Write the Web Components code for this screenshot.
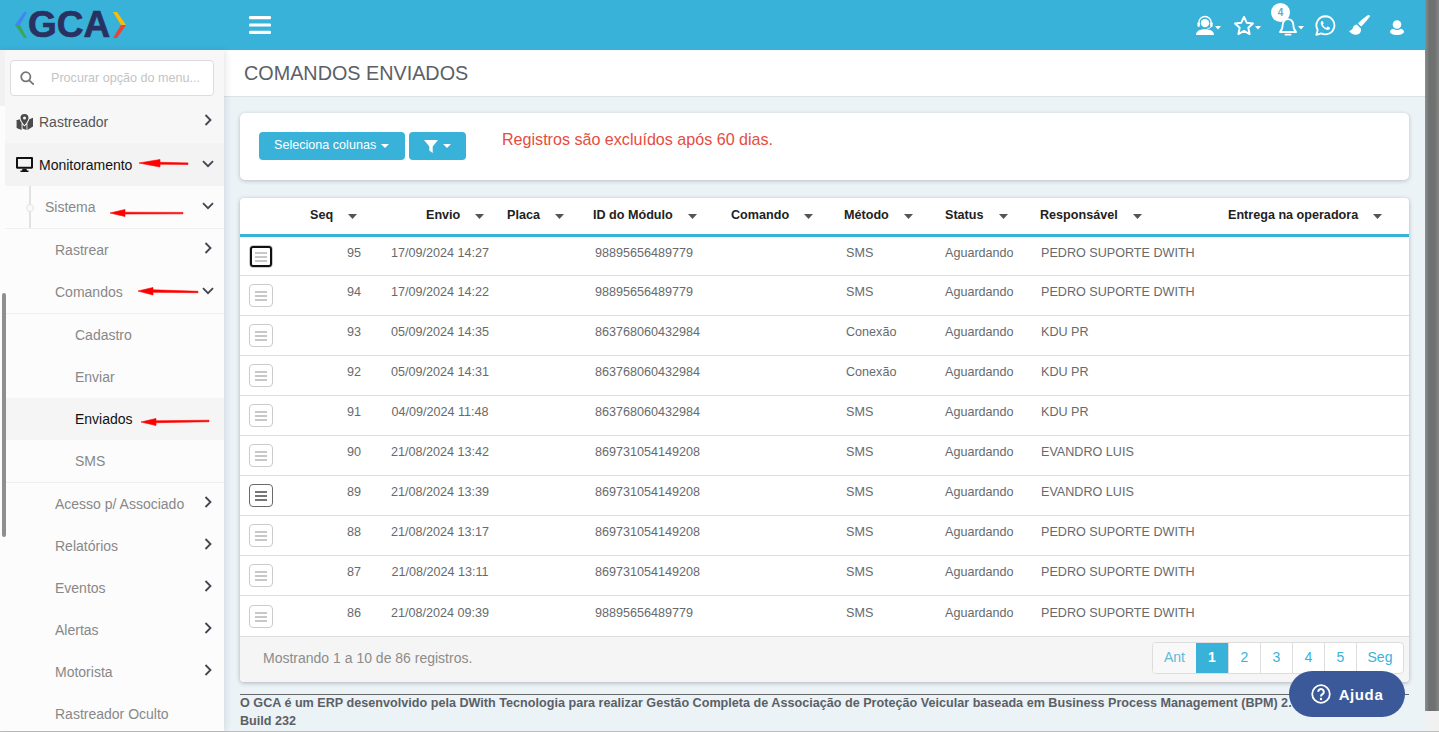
<!DOCTYPE html>
<html lang="pt-BR">
<head>
<meta charset="utf-8">
<title>Comandos enviados</title>
<style>
html, body { margin: 0; height: 732px; overflow: hidden; }
body { font-family: "Liberation Sans", Arial, sans-serif; font-size: 14px; color: #676a6c; background: #ecf3f7; }
</style>
</head>
<body>
<gca-app>
    <gca-header slot="header"></gca-header>
    <gca-sidebar slot="sidebar">
        <gca-nav-item label="Rastreador" level="0" icon="map" arrow="right" tone="top"></gca-nav-item>
        <gca-nav-item label="Monitoramento" level="0" icon="desktop" arrow="down" tone="open"></gca-nav-item>
        <gca-nav-item label="Sistema" level="1" arrow="down" tree divider></gca-nav-item>
        <gca-nav-item label="Rastrear" level="2" arrow="right"></gca-nav-item>
        <gca-nav-item label="Comandos" level="2" arrow="down" divider></gca-nav-item>
        <gca-nav-item label="Cadastro" level="3"></gca-nav-item>
        <gca-nav-item label="Enviar" level="3"></gca-nav-item>
        <gca-nav-item label="Enviados" level="3" tone="active"></gca-nav-item>
        <gca-nav-item label="SMS" level="3" divider></gca-nav-item>
        <gca-nav-item label="Acesso p/ Associado" level="2" arrow="right"></gca-nav-item>
        <gca-nav-item label="Relatórios" level="2" arrow="right"></gca-nav-item>
        <gca-nav-item label="Eventos" level="2" arrow="right"></gca-nav-item>
        <gca-nav-item label="Alertas" level="2" arrow="right"></gca-nav-item>
        <gca-nav-item label="Motorista" level="2" arrow="right"></gca-nav-item>
        <gca-nav-item label="Rastreador Oculto" level="2"></gca-nav-item>
    </gca-sidebar>
    <gca-page-title slot="main">COMANDOS ENVIADOS</gca-page-title>
    <gca-toolbar slot="main">Registros são excluídos após 60 dias.</gca-toolbar>
    <gca-table slot="main">
        <gca-row first focus seq="95" date="17/09/2024 14:27" module="98895656489779" method="SMS" status="Aguardando" user="PEDRO SUPORTE DWITH"></gca-row>
        <gca-row seq="94" date="17/09/2024 14:22" module="98895656489779" method="SMS" status="Aguardando" user="PEDRO SUPORTE DWITH"></gca-row>
        <gca-row seq="93" date="05/09/2024 14:35" module="863768060432984" method="Conexão" status="Aguardando" user="KDU PR"></gca-row>
        <gca-row seq="92" date="05/09/2024 14:31" module="863768060432984" method="Conexão" status="Aguardando" user="KDU PR"></gca-row>
        <gca-row seq="91" date="04/09/2024 11:48" module="863768060432984" method="SMS" status="Aguardando" user="KDU PR"></gca-row>
        <gca-row seq="90" date="21/08/2024 13:42" module="869731054149208" method="SMS" status="Aguardando" user="EVANDRO LUIS"></gca-row>
        <gca-row hover seq="89" date="21/08/2024 13:39" module="869731054149208" method="SMS" status="Aguardando" user="EVANDRO LUIS"></gca-row>
        <gca-row seq="88" date="21/08/2024 13:17" module="869731054149208" method="SMS" status="Aguardando" user="PEDRO SUPORTE DWITH"></gca-row>
        <gca-row seq="87" date="21/08/2024 13:11" module="869731054149208" method="SMS" status="Aguardando" user="PEDRO SUPORTE DWITH"></gca-row>
        <gca-row last seq="86" date="21/08/2024 09:39" module="98895656489779" method="SMS" status="Aguardando" user="PEDRO SUPORTE DWITH"></gca-row>
    </gca-table>
    <gca-footer slot="main"></gca-footer>
    <gca-help slot="help"></gca-help>
</gca-app>

<script>
const appTemplate = document.createElement('template');
appTemplate.innerHTML = `
<style>
:host {
    display: grid;
    grid-template-columns: 1fr 14px;
    height: 732px;
    position: relative;
    overflow: hidden;
}
.page {
    display: flex;
    flex-direction: column;
    min-width: 0;
    height: 731px;
}
.body {
    display: flex;
    flex: 1;
    min-height: 0;
}
.main {
    flex: 1;
    min-width: 0;
    display: flex;
    flex-direction: column;
}
.scrollbar {
    display: flex;
    flex-direction: column;
    background: #f1f1f1;
}
.thumb {
    height: 711px;
    background: linear-gradient(90deg, #8d8f8f, #6f7171 30%, #6f7171 70%, #858787);
    filter: blur(0.6px);
}
.baseline {
    position: absolute;
    left: 0;
    right: 0;
    bottom: 0;
    height: 1px;
    background: #bdbdbd;
}
</style>
<div class="page">
    <slot name="header"></slot>
    <div class="body">
        <slot name="sidebar"></slot>
        <div class="main"><slot name="main"></slot></div>
    </div>
</div>
<div class="scrollbar"><div class="thumb"></div></div>
<div class="baseline"></div>
<slot name="help"></slot>
`;

class GcaApp extends HTMLElement {
    constructor() {
        super();
        this.attachShadow({ mode: 'open' });
        this.shadowRoot.appendChild(appTemplate.content.cloneNode(true));
    }
}

const caretSvg = '<svg class="caret" width="6" height="4" viewBox="0 0 6 4"><path d="M0 0h6L3 3.500z" fill="#fff"/></svg>';

const headerTemplate = document.createElement('template');
headerTemplate.innerHTML = `
<style>
:host {
    display: flex;
    align-items: center;
    height: 50px;
    background: #39b2d9;
    flex: none;
}
.logo {
    width: 225px;
    flex: none;
    display: flex;
    align-items: center;
    padding-left: 15px;
    box-sizing: border-box;
}
.logo span {
    font-size: 37px;
    line-height: 50px;
    font-weight: bold;
    color: #28315f;
    -webkit-text-stroke: 0.7px #28315f;
    margin: 0 3px 0 1px;
}
.menu {
    margin-left: 24px;
    display: block;
}
.icons {
    margin-left: auto;
    padding-right: 21px;
    display: flex;
    align-items: center;
    height: 50px;
}
.icons svg { display: block; flex: none; }
.caret { margin: 5px 0 0 1px; }
.bell { position: relative; margin-left: 18px; }
.badge {
    position: absolute;
    left: -8px;
    top: -11px;
    width: 19px;
    height: 19px;
    border-radius: 50%;
    background: #fff;
    color: #6fa8c9;
    font-size: 10px;
    font-weight: bold;
    line-height: 19px;
    text-align: center;
}
</style>
<div class="logo">
    <svg width="12" height="26" viewBox="0 0 12 26">
        <path d="M9 0h3L5 13H0z" fill="#4285f4"/>
        <path d="M0 13h5l7 13H9z" fill="#3aa757"/>
    </svg>
    <span>GCA</span>
    <svg width="13" height="26" viewBox="0 0 13 26">
        <path d="M0 0h4l9 13H8z" fill="#fbbc05"/>
        <path d="M8 13h5L4 26H0z" fill="#ea4335"/>
    </svg>
</div>
<svg class="menu" width="22" height="18" viewBox="0 0 22 18" fill="#fff">
    <rect y="0" width="22" height="3.2" rx="1.2"/>
    <rect y="7.4" width="22" height="3.2" rx="1.2"/>
    <rect y="14.8" width="22" height="3.2" rx="1.2"/>
</svg>
<div class="icons">
    <svg width="18" height="21" viewBox="0 0 19 21" style="margin-top:1px">
        <path d="M3 10V7.500a6.500 6.500 0 0 1 13 0V10" fill="none" stroke="#fff" stroke-width="1.400"/>
        <circle cx="9.500" cy="8" r="4.400" fill="#fff"/>
        <rect x="1.500" y="7" width="2.600" height="5" rx="1.200" fill="#fff"/>
        <rect x="15" y="7" width="2.600" height="5" rx="1.200" fill="#fff"/>
        <path d="M16 11c0 2-2 2.600-4 2.600" fill="none" stroke="#fff" stroke-width="1"/>
        <path d="M0 20.500c0-3.800 3.600-6 9.500-6s9.500 2.200 9.500 6z" fill="#fff"/>
    </svg>
    ${caretSvg}
    <svg width="20" height="19" viewBox="0.800 0.800 18.400 17.600" style="margin-left:13px">
        <path d="M10 1.600l2.500 5.400 5.800.7-4.300 4 1.200 5.800L10 14.600l-5.200 2.900L6 11.700l-4.300-4 5.800-.7z" fill="none" stroke="#fff" stroke-width="1.800" stroke-linejoin="round"/>
    </svg>
    ${caretSvg}
    <div class="bell">
        <svg width="18" height="19" viewBox="0 0 18 19" style="margin-top:3px">
            <path d="M1 15c2-2 2.700-4 2.700-7.500a5.300 5.300 0 0 1 10.600 0C14.300 11 15 13 17 15z" fill="none" stroke="#fff" stroke-width="1.800" stroke-linejoin="round"/>
            <rect x="5.500" y="16.800" width="7" height="1.800" rx=".8" fill="#fff"/>
        </svg>
        <div class="badge">4</div>
    </div>
    ${caretSvg}
    <svg width="21" height="21" viewBox="0 0 22 22" style="margin-left:11px">
        <path d="M11 1.300a9.500 9.500 0 0 0-8.200 14.300L1.400 20.700l5.200-1.400A9.500 9.500 0 1 0 11 1.300z" fill="none" stroke="#fff" stroke-width="1.900" stroke-linejoin="round"/>
        <path d="M7.800 6.200c-.4 0-.9.200-1.200.700-.5.700-.8 1.600-.4 2.800.7 2.200 3.400 5 6 5.800 1.300.4 2.400 0 3-.7.500-.5.600-1.200.5-1.500-.1-.2-2.200-1.200-2.500-1.200-.3 0-.9 1.100-1.300 1.200-.9.200-3.300-1.900-3.700-3.100-.1-.3.900-1 .9-1.400 0-.3-.8-2.500-1.300-2.600z" fill="#fff"/>
    </svg>
    <svg width="21" height="20" viewBox="0 0 21 20" style="margin-left:13px">
        <path d="M19.300 0c-.9 0-8 5.600-10.300 8.600l3 2.900C15 9 21 1.800 21 1.200 21 .5 20 0 19.300 0z" fill="#fff"/>
        <path d="M7.800 9.400c-2.500.2-3.600 1.800-4 3.700-.3 1.300-1.600 2.500-3.800 2.900 1.700 2.700 4.800 4 7.300 3.700 3-.3 5-2.300 4.700-6z" fill="#fff"/>
    </svg>
    <svg width="14" height="15" viewBox="0 0 14 15" style="margin:5px 0 0 20px">
        <circle cx="7" cy="4.500" r="4.300" fill="#fff"/>
        <path d="M0 11.800c0-1.800 2.500-3 3.500-3 1 .8 2.200 1.200 3.500 1.200s2.500-.4 3.500-1.200c1 0 3.500 1.200 3.500 3s-3 3.200-7 3.200-7-1.400-7-3.200z" fill="#fff"/>
    </svg>
</div>
`;

class GcaHeader extends HTMLElement {
    constructor() {
        super();
        this.attachShadow({ mode: 'open' });
        this.shadowRoot.appendChild(headerTemplate.content.cloneNode(true));
    }
}

const sidebarTemplate = document.createElement('template');
sidebarTemplate.innerHTML = `
<style>
:host {
    display: block;
    position: relative;
    width: 224px;
    flex: none;
    background: #fcfcfc;
    box-shadow: 2px 0 6px rgba(40, 60, 80, 0.12);
    overflow: hidden;
    z-index: 1;
}
.search-block {
    height: 56px;
    margin-bottom: -5px;
    background: #f7f7f7;
    padding: 10px 10px 0;
    box-sizing: border-box;
}
.search {
    display: flex;
    align-items: center;
    height: 36px;
    box-sizing: border-box;
    background: #fff;
    border: 1px solid #ddd;
    border-radius: 4px;
    padding-left: 9px;
    font-size: 12.6px;
    color: #c4c4c4;
}
.search svg { margin-right: 17px; }
.gutter {
    position: absolute;
    left: 0;
    top: 0;
    width: 5px;
    height: 56px;
    background: #f1f1f1;
}
.scroll-thumb {
    position: absolute;
    left: 2px;
    top: 243px;
    width: 4px;
    height: 244px;
    border-radius: 2px;
    background: #8f8f8f;
}
.arrows {
    position: absolute;
    left: 0;
    top: 0;
    pointer-events: none;
}
</style>
<div class="search-block">
    <div class="search">
        <svg width="14" height="14" viewBox="0 0 14 14" fill="none" stroke="#777" stroke-width="1.800">
            <circle cx="5.800" cy="5.800" r="4.600"/><path d="M9.300 9.300l3.900 3.900" stroke-linecap="round"/>
        </svg>
        <span>Procurar opção do menu...</span>
    </div>
</div>
<slot></slot>
<div class="gutter"></div>
<div class="scroll-thumb"></div>
<svg class="arrows" width="224" height="682" viewBox="0 50 224 682" fill="#f00" stroke="#f00">
    <path d="M139 163l21-3.500v2.800l28 .6v1.600l-28-.3v2.800z" stroke-width=".6"/>
    <path d="M110 213l15-3.500v2.700l58 .2v1.400l-58 .2v2.500z" stroke-width=".6"/>
    <path d="M138 291l15-3.500v2.300l45 1.500v1.400l-45-.4v2.700z" stroke-width=".6"/>
    <path d="M141 422l15-3.500v2.300l53-.6v1.500l-53 1v2.800z" stroke-width=".6"/>
</svg>
`;

class GcaSidebar extends HTMLElement {
    constructor() {
        super();
        this.attachShadow({ mode: 'open' });
        this.shadowRoot.appendChild(sidebarTemplate.content.cloneNode(true));
    }
}

const navIcons = {
    map: `<svg width="17" height="16" viewBox="0 0 17 16" fill="#4a4a4a">
        <path d="M0 6.500l3.600-1.300c.5 1.500 1.200 2.800 2 3.900V16L.6 14V7z"/>
        <path d="M6.500 10.500c.7.800 1.300 1.400 2 2 .7-.6 1.300-1.200 2-2V16l-4-1.500z"/>
        <path d="M11.400 9.100c.8-1.100 1.500-2.400 2-3.900l3.600-1.400v8.800l-5.600 3.400z"/>
        <path fill-rule="evenodd" d="M8.500 0a4 4 0 0 1 4 4c0 2-2.500 5.500-4 7.300C7 9.500 4.500 6 4.500 4a4 4 0 0 1 4-4zm0 2.500a1.500 1.500 0 1 0 0 3 1.500 1.500 0 0 0 0-3z"/>
    </svg>`,
    desktop: `<svg width="17" height="15" viewBox="0 0 17 15" fill="#111">
        <path fill-rule="evenodd" d="M1.200 0h14.600c.7 0 1.200.5 1.200 1.200v9.300c0 .7-.5 1.200-1.200 1.200H1.200C.5 11.700 0 11.200 0 10.500V1.200C0 .5.500 0 1.200 0zm.8 2v7.700h13V2z"/>
        <path d="M6.500 11.700h4l.4 1.700h1.600V15h-8v-1.600h1.600z"/>
    </svg>`
};

const navArrows = {
    right: '<svg width="8" height="12" viewBox="0 0 8 12"><path d="M1.500 1l5 5-5 5" fill="none" stroke="#3f4650" stroke-width="1.800"/></svg>',
    down: '<svg width="12" height="8" viewBox="0 0 12 8"><path d="M1 1.200l5 5 5-5" fill="none" stroke="#3f4650" stroke-width="1.800"/></svg>'
};

const navItemTemplate = document.createElement('template');
navItemTemplate.innerHTML = `
<style>
:host {
    display: flex;
    align-items: center;
    position: relative;
    height: 42px;
    box-sizing: border-box;
    font-size: 14px;
    color: #888;
    margin-left: 5px;
}
:host([level="0"]) { padding-left: 11px; }
:host([level="1"]) { padding-left: 40px; }
:host([level="2"]) { padding-left: 50px; }
:host([level="3"]) { padding-left: 70px; }
:host([divider]), :host([tone="open"]) { height: 43px; }
:host([divider]) { border-bottom: 1px solid #efefef; }
:host([tone="top"]) { background: #f7f7f7; color: #555; }
:host([tone="open"]) { background: #f3f3f3; color: #111; }
:host([tone="active"]) { background: #f5f5f5; color: #111; }
.icon { display: flex; width: 23px; flex: none; }
.arrow {
    position: absolute;
    left: 197px;
    top: 0;
    bottom: 0;
    width: 12px;
    display: flex;
    align-items: center;
    justify-content: center;
}
.arrow.right { padding-bottom: 4px; box-sizing: border-box; }
.arrow.down { padding-bottom: 2px; box-sizing: border-box; }
.line {
    position: absolute;
    left: 24px;
    top: 0;
    bottom: 0;
    width: 2px;
    background: #e2e2e2;
}
.dot {
    position: absolute;
    left: 21px;
    top: 18px;
    width: 6px;
    height: 6px;
    border: 1px solid #e2e2e2;
    border-radius: 50%;
    background: #fafafa;
}
</style>
`;

class GcaNavItem extends HTMLElement {
    constructor() {
        super();
        this.attachShadow({ mode: 'open' });
        this.shadowRoot.appendChild(navItemTemplate.content.cloneNode(true));
    }

    connectedCallback() {
        const icon = this.getAttribute('icon');
        const arrow = this.getAttribute('arrow');
        const holder = document.createElement('template');
        holder.innerHTML = `
            ${this.hasAttribute('tree') ? '<div class="line"></div><div class="dot"></div>' : ''}
            ${icon ? `<span class="icon">${navIcons[icon]}</span>` : ''}
            <span>${this.getAttribute('label')}</span>
            ${arrow ? `<span class="arrow ${arrow}">${navArrows[arrow]}</span>` : ''}
        `;
        this.shadowRoot.appendChild(holder.content);
    }
}

const pageTitleTemplate = document.createElement('template');
pageTitleTemplate.innerHTML = `
<style>
:host {
    display: flex;
    align-items: center;
    height: 47px;
    box-sizing: border-box;
    padding-left: 20px;
    background: #fff;
    border-bottom: 1px solid #dde2e5;
    font-size: 19.8px;
    color: #5b6066;
}
</style>
<slot></slot>
`;

class GcaPageTitle extends HTMLElement {
    constructor() {
        super();
        this.attachShadow({ mode: 'open' });
        this.shadowRoot.appendChild(pageTitleTemplate.content.cloneNode(true));
    }
}

const toolbarTemplate = document.createElement('template');
toolbarTemplate.innerHTML = `
<style>
:host {
    display: flex;
    align-items: flex-start;
    height: 67px;
    box-sizing: border-box;
    margin: 16px 16px 0 16px;
    padding: 19px 0 0 19px;
    background: #fff;
    border-radius: 5px;
    box-shadow: 0 1px 4px rgba(0, 0, 0, 0.22);
}
button {
    display: flex;
    align-items: center;
    height: 28px;
    border: 0;
    border-radius: 4px;
    background: #39b2d9;
    color: #fff;
    font: 12.6px "Liberation Sans", Arial, sans-serif;
    padding: 0 0 2px;
}
.columns { width: 146px; padding-left: 15px; }
.filter { width: 57px; padding: 0 0 0 15px; margin-left: 4px; }
.sort { margin-left: 5px; }
.columns .sort { margin-top: 2px; }
.note {
    margin: -1px 0 0 36px;
    font-size: 16.1px;
    line-height: 16px;
    color: #e74c3c;
}
</style>
<button class="columns">Seleciona colunas<svg class="sort" width="8" height="4" viewBox="0 0 8 4"><path d="M0 0h8L4 4z" fill="#fff"/></svg></button>
<button class="filter">
    <svg width="14" height="13" viewBox="0 0 14 13"><path d="M0 0h14L8.700 6.500V13L5.300 10.500v-4z" fill="#fff"/></svg>
    <svg class="sort" width="8" height="4" viewBox="0 0 8 4"><path d="M0 0h8L4 4z" fill="#fff"/></svg>
</button>
<div class="note"><slot></slot></div>
`;

class GcaToolbar extends HTMLElement {
    constructor() {
        super();
        this.attachShadow({ mode: 'open' });
        this.shadowRoot.appendChild(toolbarTemplate.content.cloneNode(true));
    }
}

const COLUMNS = '56px 75px 126px 86px 138px 113px 101px 95px 188px 191px';

const tableTemplate = document.createElement('template');
tableTemplate.innerHTML = `
<style>
:host {
    display: block;
    margin: 18px 16px 0 16px;
    background: #fff;
    border-radius: 4px;
    box-shadow: 0 1px 4px rgba(0, 0, 0, 0.28);
    font-size: 12.6px;
}
.head {
    display: grid;
    grid-template-columns: ${COLUMNS};
    height: 39px;
    box-sizing: border-box;
    border-bottom: 3px solid #39b2d9;
    padding-bottom: 3px;
    align-items: center;
    font-weight: bold;
    color: #222;
}
.head div {
    display: flex;
    align-items: center;
    padding-left: 10px;
    white-space: nowrap;
}
.head div.seq { padding-left: 14px; }
.head div.envio { padding-left: 55px; }
.head svg { margin: 3px 0 0 15px; flex: none; }
.foot {
    display: flex;
    justify-content: space-between;
    height: 45px;
    box-sizing: border-box;
    padding: 5px 5px 0 23px;
    background: #f5f5f5;
    border-radius: 0 0 4px 4px;
    font-size: 14px;
    color: #8c8c8c;
}
.count { line-height: 32px; }
.pages {
    display: flex;
    height: 32px;
    box-sizing: border-box;
    border: 1px solid #ddd;
    border-radius: 4px;
    background: #fff;
    color: #39b2d9;
    overflow: hidden;
}
.pages span {
    display: flex;
    align-items: center;
    justify-content: center;
    width: 32px;
    box-sizing: border-box;
    border-left: 1px solid #ddd;
    padding-bottom: 3px;
}
.pages span:first-child { width: 43px; border-left: 0; background: #f8f8f8; color: #5fb9d8; }
.pages span:last-child { width: 47px; }
.pages span.on { background: #39b2d9; color: #fff; border-left: 0; font-weight: bold; }
</style>
<div class="head">
    <div></div>
    <div class="seq">Seq<svg width="9" height="5" viewBox="0 0 9 5"><path d="M0 0h9L4.500 5z" fill="#555"/></svg></div>
    <div class="envio">Envio<svg width="9" height="5" viewBox="0 0 9 5"><path d="M0 0h9L4.500 5z" fill="#555"/></svg></div>
    <div>Placa<svg width="9" height="5" viewBox="0 0 9 5"><path d="M0 0h9L4.500 5z" fill="#555"/></svg></div>
    <div>ID do Módulo<svg width="9" height="5" viewBox="0 0 9 5"><path d="M0 0h9L4.500 5z" fill="#555"/></svg></div>
    <div>Comando<svg width="9" height="5" viewBox="0 0 9 5"><path d="M0 0h9L4.500 5z" fill="#555"/></svg></div>
    <div>Método<svg width="9" height="5" viewBox="0 0 9 5"><path d="M0 0h9L4.500 5z" fill="#555"/></svg></div>
    <div>Status<svg width="9" height="5" viewBox="0 0 9 5"><path d="M0 0h9L4.500 5z" fill="#555"/></svg></div>
    <div>Responsável<svg width="9" height="5" viewBox="0 0 9 5"><path d="M0 0h9L4.500 5z" fill="#555"/></svg></div>
    <div>Entrega na operadora<svg width="9" height="5" viewBox="0 0 9 5"><path d="M0 0h9L4.500 5z" fill="#555"/></svg></div>
</div>
<slot></slot>
<div class="foot">
    <div class="count">Mostrando 1 a 10 de 86 registros.</div>
    <div class="pages">
        <span>Ant</span><span class="on">1</span><span>2</span><span>3</span><span>4</span><span>5</span><span>Seg</span>
    </div>
</div>
`;

class GcaTable extends HTMLElement {
    constructor() {
        super();
        this.attachShadow({ mode: 'open' });
        this.shadowRoot.appendChild(tableTemplate.content.cloneNode(true));
    }
}

const rowTemplate = document.createElement('template');
rowTemplate.innerHTML = `
<style>
:host {
    display: grid;
    grid-template-columns: ${COLUMNS};
    height: 40px;
    box-sizing: border-box;
    border-bottom: 1px solid #ddd;
    color: #676a6c;
    padding-top: 9px;
    line-height: 14px;
    white-space: nowrap;
}
:host([first]) { height: 39px; }
:host([last]) { height: 41px; padding-top: 10px; }
button {
    display: flex;
    flex-direction: column;
    justify-content: center;
    align-items: center;
    gap: 2px;
    width: 24px;
    height: 23px;
    margin: -1px 0 0 9px;
    padding: 0;
    box-sizing: border-box;
    background: #fff;
    border: 1px solid #ccc;
    border-radius: 4px;
}
button i { display: block; width: 12px; height: 2px; background: #c8c8c8; }
:host([hover]) button { border-color: #676a6c; }
:host([hover]) button i { background: #777; }
:host([focus]) button { outline: 2px solid #111; outline-offset: -3px; }
.cell { height: 14px; }
.seq { text-align: right; padding-right: 10px; }
.date { text-align: center; padding-left: 12px; }
.module, .method { padding-left: 12px; }
.status { padding-left: 10px; }
.user { padding-left: 11px; }
</style>
<div><button aria-label="Opções"><i></i><i></i><i></i></button></div>
<div class="cell seq"></div>
<div class="cell date"></div>
<div class="cell"></div>
<div class="cell module"></div>
<div class="cell"></div>
<div class="cell method"></div>
<div class="cell status"></div>
<div class="cell user"></div>
<div class="cell"></div>
`;

class GcaRow extends HTMLElement {
    constructor() {
        super();
        this.attachShadow({ mode: 'open' });
        this.shadowRoot.appendChild(rowTemplate.content.cloneNode(true));
    }

    connectedCallback() {
        ['seq', 'date', 'module', 'method', 'status', 'user'].forEach((name) => {
            this.shadowRoot.querySelector('.' + name).textContent = this.getAttribute(name);
        });
    }
}

const footerTemplate = document.createElement('template');
footerTemplate.innerHTML = `
<style>
:host {
    display: block;
    margin: 12px 16px 0 16px;
    border-top: 1px solid #666;
    font-size: 12.6px;
    font-weight: bold;
    line-height: 18px;
    letter-spacing: 0.012px;
    color: #5b6066;
    white-space: nowrap;
}
.text { margin-top: -1px; }
</style>
<div class="text">O GCA é um ERP desenvolvido pela DWith Tecnologia para realizar Gestão Completa de Associação de Proteção Veicular baseada em Business Process Management (BPM) 2.0<br>Build 232</div>
`;

class GcaFooter extends HTMLElement {
    constructor() {
        super();
        this.attachShadow({ mode: 'open' });
        this.shadowRoot.appendChild(footerTemplate.content.cloneNode(true));
    }
}

const helpTemplate = document.createElement('template');
helpTemplate.innerHTML = `
<style>
:host {
    position: absolute;
    left: 1289px;
    top: 671px;
    width: 116px;
    height: 46px;
    display: flex;
    align-items: center;
    justify-content: center;
    gap: 8px;
    border-radius: 23px;
    background: #3b5998;
    color: #fff;
    font-size: 15px;
    font-weight: bold;
    letter-spacing: 0.6px;
}
</style>
<svg width="20" height="20" viewBox="0 0 20 20" fill="none" stroke="#fff" stroke-width="1.800">
    <circle cx="10" cy="10" r="8.800"/>
    <path d="M7.200 7.800a2.800 2.800 0 1 1 4.300 2.400c-1 .6-1.500 1.100-1.500 2.200" stroke-width="2"/>
    <circle cx="10" cy="15" r="1.200" fill="#fff" stroke="none"/>
</svg>
<span>Ajuda</span>
`;

class GcaHelp extends HTMLElement {
    constructor() {
        super();
        this.attachShadow({ mode: 'open' });
        this.shadowRoot.appendChild(helpTemplate.content.cloneNode(true));
    }
}

customElements.define('gca-app', GcaApp);
customElements.define('gca-header', GcaHeader);
customElements.define('gca-sidebar', GcaSidebar);
customElements.define('gca-nav-item', GcaNavItem);
customElements.define('gca-page-title', GcaPageTitle);
customElements.define('gca-toolbar', GcaToolbar);
customElements.define('gca-table', GcaTable);
customElements.define('gca-row', GcaRow);
customElements.define('gca-footer', GcaFooter);
customElements.define('gca-help', GcaHelp);
</script>
</body>
</html>
